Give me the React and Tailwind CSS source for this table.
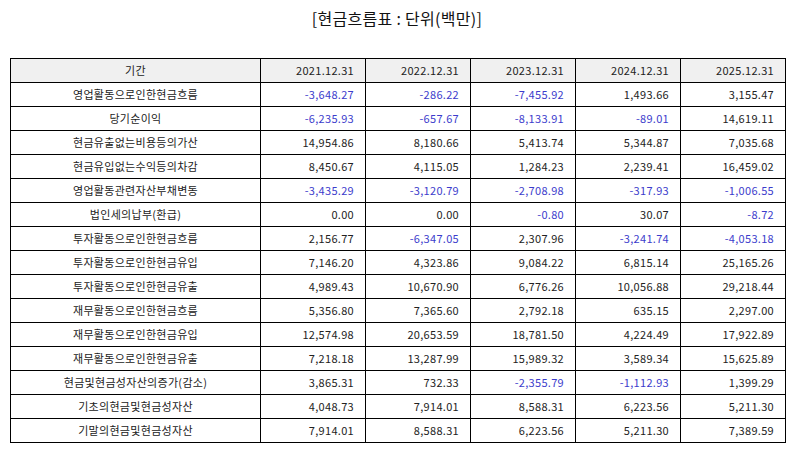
import React from "react";

const rows = [
  ["영업활동으로인한현금흐름", "-3,648.27", "-286.22", "-7,455.92", "1,493.66", "3,155.47"],
  ["당기순이익", "-6,235.93", "-657.67", "-8,133.91", "-89.01", "14,619.11"],
  ["현금유출없는비용등의가산", "14,954.86", "8,180.66", "5,413.74", "5,344.87", "7,035.68"],
  ["현금유입없는수익등의차감", "8,450.67", "4,115.05", "1,284.23", "2,239.41", "16,459.02"],
  ["영업활동관련자산부채변동", "-3,435.29", "-3,120.79", "-2,708.98", "-317.93", "-1,006.55"],
  ["법인세의납부(환급)", "0.00", "0.00", "-0.80", "30.07", "-8.72"],
  ["투자활동으로인한현금흐름", "2,156.77", "-6,347.05", "2,307.96", "-3,241.74", "-4,053.18"],
  ["투자활동으로인한현금유입", "7,146.20", "4,323.86", "9,084.22", "6,815.14", "25,165.26"],
  ["투자활동으로인한현금유출", "4,989.43", "10,670.90", "6,776.26", "10,056.88", "29,218.44"],
  ["재무활동으로인한현금흐름", "5,356.80", "7,365.60", "2,792.18", "635.15", "2,297.00"],
  ["재무활동으로인한현금유입", "12,574.98", "20,653.59", "18,781.50", "4,224.49", "17,922.89"],
  ["재무활동으로인한현금유출", "7,218.18", "13,287.99", "15,989.32", "3,589.34", "15,625.89"],
  ["현금및현금성자산의증가(감소)", "3,865.31", "732.33", "-2,355.79", "-1,112.93", "1,399.29"],
  ["기초의현금및현금성자산", "4,048.73", "7,914.01", "8,588.31", "6,223.56", "5,211.30"],
  ["기말의현금및현금성자산", "7,914.01", "8,588.31", "6,223.56", "5,211.30", "7,389.59"],
];

const dates = ["2021.12.31", "2022.12.31", "2023.12.31", "2024.12.31", "2025.12.31"];

export default function App() {
  return (
    <div
      className="w-[794px] h-[452px] bg-white text-[#222] px-[10px]"
      style={{ fontFamily: '"Noto Sans CJK KR", "Noto Sans", sans-serif' }}
    >
      <div className="h-[36px] flex items-center justify-center text-[16px] text-[#111] tracking-[0.3px] whitespace-pre">
        [현금흐름표 : 단위(백만)]
      </div>
      <div className="h-[22px]" />
      <table className="w-[775px] border-collapse table-fixed text-[11px] leading-none tracking-[0.3px]">
        <colgroup>
          <col className="w-[250px]" />
          <col className="w-[105px]" />
          <col className="w-[105px]" />
          <col className="w-[105px]" />
          <col className="w-[105px]" />
          <col className="w-[105px]" />
        </colgroup>
        <thead>
          <tr className="h-[24px] bg-[#f0f0f0]">
            <th className="border border-black font-normal text-center">기간</th>
            {dates.map((d) => (
              <th key={d} className="border border-black font-normal text-right pr-[11px]">
                {d}
              </th>
            ))}
          </tr>
        </thead>
        <tbody>
          {rows.map((r) => (
            <tr key={r[0]} className="h-[24px]">
              <td className="border border-black text-center">{r[0]}</td>
              {r.slice(1).map((v, i) => (
                <td
                  key={i}
                  className={
                    "border border-black text-right pr-[11px] " +
                    (v.startsWith("-") ? "text-[#3c3ccc]" : "text-[#222]")
                  }
                >
                  {v}
                </td>
              ))}
            </tr>
          ))}
        </tbody>
      </table>
    </div>
  );
}
